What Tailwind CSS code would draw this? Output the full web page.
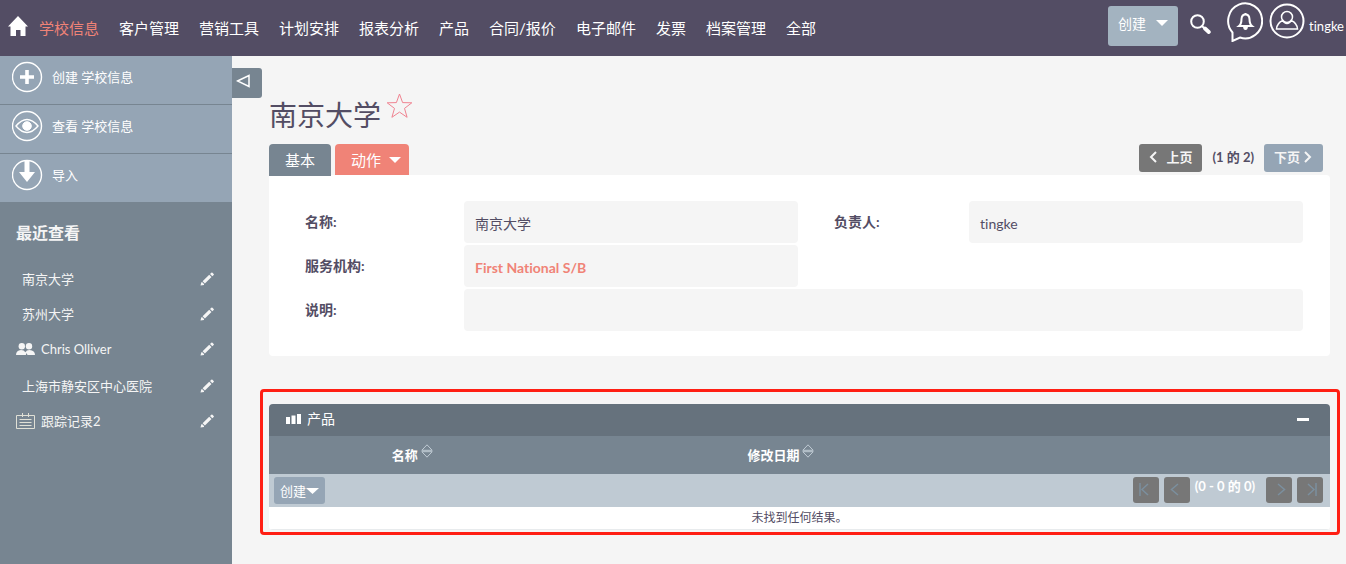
<!DOCTYPE html>
<html lang="zh-CN">
<head>
<meta charset="utf-8">
<meta name="viewport" content="width=device-width, initial-scale=1">
<title>南京大学</title>
<script src="https://cdn.jsdelivr.net/npm/@tailwindcss/browser@4"></script>
</head>
<body class="flex min-h-screen flex-col bg-[#f5f5f5] font-['Lato','Noto_Sans_CJK_SC',sans-serif] text-[13px] leading-5 text-[#534d64] [font-variant-ligatures:none]">

<svg class="hidden" aria-hidden="true">
  <symbol id="pencil" viewBox="0 0 16 16"><path d="M1.500 14.500l.8-3.300 1 0 1.700 1.700 0 1zM3.600 10.300l6.600-6.600 2.300 2.300-6.600 6.600zM11 2.900l1.300-1.200q.6-.5 1.200 0l1.200 1.200q.5.6 0 1.200L13.300 5.200z" fill="currentColor"/></symbol>
  <symbol id="sort" viewBox="0 0 12 14"><path d="M6 .8L11.200 6.300H.8zM6 13.200L11.200 7.700H.8z" fill="none" stroke="currentColor" stroke-width="1"/></symbol>
  <symbol id="caret" viewBox="0 0 12 6"><path d="M0 0h12L6 6z" fill="currentColor"/></symbol>
</svg>

<header class="flex h-14 shrink-0 items-center bg-[#534d64] text-white">
  <a href="#" aria-label="首页" class="ml-2 -mt-1">
    <svg class="h-5 w-5" viewBox="0 0 20 20"><path d="M10 0L20 10.500H17.500V20H12.500V14H8V20H2.500V10.500H0z" fill="#fff"/></svg>
  </a>
  <nav class="ml-[11px] flex items-center gap-5 whitespace-nowrap text-[15px]">
    <a href="#" class="text-[#f08377]">学校信息</a>
    <a href="#">客户管理</a>
    <a href="#">营销工具</a>
    <a href="#">计划安排</a>
    <a href="#">报表分析</a>
    <a href="#">产品</a>
    <a href="#">合同/报价</a>
    <a href="#">电子邮件</a>
    <a href="#">发票</a>
    <a href="#">档案管理</a>
    <a href="#">全部</a>
  </nav>
  <div class="ml-auto flex items-center whitespace-nowrap pr-0.5">
    <button class="-mt-1 flex h-10 w-[70px] items-center justify-between rounded-[3px] bg-[#a3b3c0] px-2.5 pb-1 text-[14px]">创建
      <svg class="-mt-0.5 h-1.5 w-3"><use href="#caret"/></svg>
    </button>
    <button aria-label="搜索" class="-mt-2 ml-3">
      <svg class="h-5 w-[21px]" viewBox="0 0 21 20"><circle cx="7.500" cy="7.500" r="6.300" fill="none" stroke="#fff" stroke-width="2"/><path d="M12 12l2 2" stroke="#fff" stroke-width="2"/><path d="M15 14.500l3.800 3.500" stroke="#fff" stroke-width="3.800" stroke-linecap="round"/></svg>
    </button>
    <button aria-label="通知" class="-mt-3 ml-4">
      <svg class="h-10 w-9" viewBox="0 0 36 40" fill="none" stroke="#fff"><path d="M5.500 30.500A17 17.500 0 1 1 13 35.500L5.500 39z" stroke-width="2"/><path d="M12 24q2.500-2 2.500-7 .3-4.500 4-4.500t4 4.500q0 5 2.500 7z" stroke-width="2"/><path d="M16 24.500h5q-.3 3.500-2.500 3.500t-2.500-3.500zM17.500 11h2v2h-2z" fill="#fff" stroke="none"/></svg>
    </button>
    <a href="#" class="-mt-2 ml-1.5 flex items-center gap-1 text-[13px]">
      <svg class="-mt-1.5 h-9 w-9" viewBox="0 0 36 36" fill="none" stroke="#fff"><circle cx="18" cy="18" r="16.500" stroke-width="2"/><circle cx="18" cy="14" r="5.500" stroke-width="1.500"/><path d="M13.800 17.500q-5.800 2.500-6.300 8.500h21q-.5-6-6.300-8.500-1.500 3-4.200 3t-4.200-3z" stroke-width="1.500"/></svg>
      <span class="mt-1">tingke</span>
    </a>
  </div>
</header>

<div class="flex grow">
  <aside class="w-[232px] shrink-0 bg-[#778591] text-white">
    <nav class="bg-[#95a5b5]">
      <a href="#" class="flex h-[49px] items-center gap-2 border-b border-[#778591] pb-1.5 pl-3">
        <svg class="h-8 w-8" viewBox="0 0 32 32"><circle cx="15" cy="16" r="14.500" fill="none" stroke="#fff" stroke-width="1.400"/><path d="M15 9v14M8 16h14" stroke="#fff" stroke-width="3.600"/></svg>
        <span>创建 学校信息</span>
      </a>
      <a href="#" class="flex h-[49px] items-center gap-2 border-b border-[#778591] pb-1.5 pl-3">
        <svg class="h-8 w-8" viewBox="0 0 32 32" fill="none" stroke="#fff"><circle cx="15" cy="16" r="14.500" stroke-width="1.400"/><path d="M4 16q11-13 22 0-11 13-22 0z" stroke-width="1.400"/><circle cx="15" cy="16" r="4.300" fill="#fff"/></svg>
        <span>查看 学校信息</span>
      </a>
      <a href="#" class="flex h-12 items-center gap-2 pb-1.5 pl-3">
        <svg class="h-8 w-8" viewBox="0 0 32 32"><circle cx="15" cy="16" r="14.500" fill="none" stroke="#fff" stroke-width="1.400"/><path d="M12.500 2h5v11H23l-8 10-8-10h5.500z" fill="#fff"/></svg>
        <span>导入</span>
      </a>
    </nav>
    <h2 class="px-4 pt-[19px] text-[16px] leading-6 font-bold text-[#f5f5f5]">最近查看</h2>
    <ul class="pt-4 pr-[17px] pl-4 text-[#f5f5f5]">
      <li class="flex h-[35px] items-center justify-between"><a href="#" class="pl-1.5">南京大学</a><a href="#" aria-label="编辑 南京大学"><svg class="h-4 w-4"><use href="#pencil"/></svg></a></li>
      <li class="flex h-[35px] items-center justify-between"><a href="#" class="pl-1.5">苏州大学</a><a href="#" aria-label="编辑 苏州大学"><svg class="h-4 w-4"><use href="#pencil"/></svg></a></li>
      <li class="mb-0.5 flex h-[35px] items-center justify-between"><a href="#" class="flex items-center gap-1.5"><svg class="h-3 w-[19px]" viewBox="0 0 19 12" fill="#f5f5f5"><circle cx="5.800" cy="3.200" r="3.200"/><circle cx="13" cy="3.200" r="3.200"/><path d="M0 12q0-4.500 5-5 3 0 4.400 2.200Q10.500 7 13.500 7q5.500.5 5.500 5h-7.500l-1-2-.7 2z"/></svg>Chris Olliver</a><a href="#" aria-label="编辑 Chris Olliver"><svg class="h-4 w-4"><use href="#pencil"/></svg></a></li>
      <li class="flex h-[35px] items-center justify-between"><a href="#" class="pl-1.5">上海市静安区中心医院</a><a href="#" aria-label="编辑 上海市静安区中心医院"><svg class="h-4 w-4"><use href="#pencil"/></svg></a></li>
      <li class="flex h-[35px] items-center justify-between"><a href="#" class="flex items-center gap-1.5"><svg class="h-4 w-[19px]" viewBox="0 0 19 16" fill="none" stroke="#e0e0d6"><path d="M.5 2.500h18v13H.5zM3.500 6.500h12M3.500 9.500h12M3.500 12.500h12M6.500 0v4M12.500 0v4"/></svg>跟踪记录2</a><a href="#" aria-label="编辑 跟踪记录2"><svg class="h-4 w-4"><use href="#pencil"/></svg></a></li>
    </ul>
  </aside>

  <main class="relative min-w-0 grow pr-1.5 pl-7">
    <button aria-label="收起侧栏" class="absolute top-3 left-0 flex h-[30px] w-[30px] items-center rounded-r-[3px] bg-[#778591] pb-1 pl-1">
      <svg class="h-[14px] w-[15px]" viewBox="0 0 15 14"><path d="M1.500 7L13 1.500v11z" fill="none" stroke="#fff" stroke-width="1.500"/></svg>
    </button>

    <div class="pt-9 pr-2.5 pl-[9px]">
      <div class="flex h-[52px] items-start gap-[5px]">
        <h1 class="pt-[7px] text-[28px] leading-8">南京大学</h1>
        <button aria-label="收藏"><svg class="h-[27px] w-[27px]" viewBox="0 0 27 27"><path d="M13.500 2l3.100 8.600 9.200.2-7.300 5.600 2.600 8.900-7.600-5.200-7.600 5.200 2.600-8.900L1.200 10.800l9.200-.2z" fill="none" stroke="#f08391" stroke-width="1"/></svg></button>
      </div>
      <div class="flex h-[31px] items-start gap-1">
        <button class="h-8 w-[62px] rounded-t-[4px] bg-[#778591] text-[15px] text-white">基本</button>
        <button class="flex h-[31px] w-[74px] items-center justify-between rounded-t-[4px] bg-[#f08377] pr-2 pl-4 text-[15px] text-white">动作<svg class="h-1.5 w-3"><use href="#caret"/></svg></button>
        <div class="ml-auto flex items-center gap-2.5 pr-[7px] font-bold">
          <button class="flex h-7 w-[63px] items-center justify-between rounded-[3px] bg-[#777] px-2.5 pb-0.5 text-[#f5f5f5]"><svg class="h-3 w-2" viewBox="0 0 8 12"><path d="M7 1L2 6l5 5" fill="none" stroke="currentColor" stroke-width="2"/></svg>上页</button>
          <span class="pb-0.5">(1 的 2)</span>
          <button class="flex h-7 w-[59px] items-center justify-between rounded-[3px] bg-[#95a5b5] pr-[11px] pb-0.5 pl-2.5 text-[#f5f5f5]">下页<svg class="h-3 w-2" viewBox="0 0 8 12"><path d="M1 1l5 5-5 5" fill="none" stroke="currentColor" stroke-width="2"/></svg></button>
        </div>
      </div>

      <dl class="grid grid-cols-[159px_1fr_171px_1fr] gap-y-0.5 rounded-[4px] rounded-tl-none bg-white pt-[26px] pr-[27px] pb-[25px] pl-9 text-[14px]">
        <dt class="pt-[11px] font-bold">名称:</dt>
        <dd class="flex h-[42px] items-center rounded-[4px] bg-[#f5f5f5] px-[11px] pt-1">南京大学</dd>
        <dt class="pt-[11px] pl-9 font-bold">负责人:</dt>
        <dd class="flex h-[42px] items-center rounded-[4px] bg-[#f5f5f5] px-[11px] pt-1">tingke</dd>
        <dt class="pt-[11px] font-bold">服务机构:</dt>
        <dd class="col-end-3 flex h-[42px] items-center rounded-[4px] bg-[#f5f5f5] px-[11px] pt-1"><a href="#" class="font-bold text-[#f08377]">First National S/B</a></dd>
        <dt class="col-start-1 pt-[11px] font-bold">说明:</dt>
        <dd class="col-span-3 h-[42px] rounded-[4px] bg-[#f5f5f5]"></dd>
      </dl>
    </div>

    <section class="mt-[33px] rounded-[4px] border-3 border-[#ff1f14] pt-3 pr-[7px] pb-0.5 pl-1.5">
      <div class="overflow-hidden rounded-[4px]">
        <div class="flex h-8 items-center bg-[#66727d] pr-[21px] pb-0.5 pl-[17px] text-[14px] text-white">
          <svg class="h-2.5 w-[15px]" viewBox="0 0 15 10"><path d="M0 3h4v7H0zM5.500 1.500h4V10h-4zM11 0h4v10h-4z" fill="#fff"/></svg>
          <h2 class="ml-1.5">产品</h2>
          <button aria-label="折叠" class="ml-auto flex h-4 w-3 items-center"><span class="h-[3px] w-3 bg-white"></span></button>
        </div>
        <table class="w-full table-fixed border-b border-[#e8ebed] bg-white">
          <colgroup><col class="w-[27%]"><col class="w-[42.5%]"><col></colgroup>
          <thead>
            <tr class="h-[38px] bg-[#778591] text-white">
              <th><a href="#" class="inline-flex items-center gap-[3px]">名称<svg class="-mt-2 h-3.5 w-3 text-[#bfcad3]"><use href="#sort"/></svg></a></th>
              <th><a href="#" class="inline-flex items-center gap-[3px]">修改日期<svg class="-mt-2 h-3.5 w-3 text-[#bfcad3]"><use href="#sort"/></svg></a></th>
              <td></td>
            </tr>
            <tr class="bg-[#bfcad3]">
              <td colspan="3" class="p-0">
                <div class="flex h-[33px] items-start gap-[5px] pt-[3px] pr-[7px] pl-[5px] text-white">
                  <button class="flex h-[27px] w-[51px] items-center rounded-[3px] bg-[#95a5b5] pl-1.5">创建<svg class="h-1.5 w-[13px]" viewBox="0 0 12 6" preserveAspectRatio="none"><path d="M0 0h12L6 6z" fill="#fff"/></svg></button>
                  <button aria-label="首页" disabled class="ml-auto flex h-[26px] w-[26px] items-center rounded-[3px] bg-[#777] pb-0.5 pl-1.5 text-[#7b8f9e]"><svg class="h-[13px] w-2.5" viewBox="0 0 10 13"><path d="M1 0v13M9 1L3 6.500 9 12" fill="none" stroke="currentColor" stroke-width="1.500"/></svg></button>
                  <button aria-label="上一页" disabled class="flex h-[26px] w-[26px] items-center rounded-[3px] bg-[#777] pb-0.5 pl-1.5 text-[#7b8f9e]"><svg class="h-[13px] w-2.5" viewBox="0 0 10 13"><path d="M8 1L1.500 6.500 8 12" fill="none" stroke="currentColor" stroke-width="1.500"/></svg></button>
                  <span class="-mt-px mr-1.5 font-bold whitespace-nowrap">(0 - 0 的 0)</span>
                  <button aria-label="下一页" disabled class="flex h-[26px] w-[26px] items-center justify-end rounded-[3px] bg-[#777] pr-1.5 pb-0.5 text-[#7b8f9e]"><svg class="h-[13px] w-2.5" viewBox="0 0 10 13"><path d="M2 1l6.500 5.500L2 12" fill="none" stroke="currentColor" stroke-width="1.500"/></svg></button>
                  <button aria-label="末页" disabled class="flex h-[26px] w-[26px] items-center justify-end rounded-[3px] bg-[#777] pr-1.5 pb-0.5 text-[#7b8f9e]"><svg class="h-[13px] w-2.5" viewBox="0 0 10 13"><path d="M9 0v13M1 1l6 5.500L1 12" fill="none" stroke="currentColor" stroke-width="1.500"/></svg></button>
                </div>
              </td>
            </tr>
          </thead>
          <tbody>
            <tr class="h-[22px] text-center text-[12px]"><td colspan="3" class="p-0">未找到任何结果。</td></tr>
          </tbody>
        </table>
      </div>
    </section>
  </main>
</div>
</body>
</html>
